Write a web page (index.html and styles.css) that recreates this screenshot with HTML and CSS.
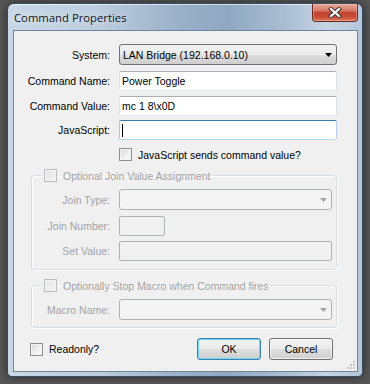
FILE: index.html
```html
<!DOCTYPE html>
<html lang="en">

<head>
    <meta charset="UTF-8">
    <title>Command Properties</title>
    <link rel="stylesheet" href="styles.css">
</head>

<body>

    <div class="window">
        <div class="titlebar">
            <span class="title">Command Properties</span>
            <div class="close">
                <svg width="14" height="11" viewBox="0 0 14 11">
                    <path d="M3 2 L11 9 M11 2 L3 9" stroke="#3a3a3a" stroke-width="4.2" stroke-linecap="square" fill="none"/>
                    <path d="M3 2 L11 9 M11 2 L3 9" stroke="#ffffff" stroke-width="2.2" stroke-linecap="square" fill="none"/>
                </svg>
            </div>
        </div>

        <div class="client">
            <div class="row row-system">
                <label class="lbl">System:</label>
                <div class="combo">
                    <span>LAN Bridge (192.168.0.10)</span>
                    <svg class="arrow" width="7" height="4" viewBox="0 0 7 4"><path d="M0 0 H7 L3.5 4 Z" fill="#000"/></svg>
                </div>
            </div>
            <div class="row row-name">
                <label class="lbl">Command Name:</label>
                <div class="textbox">Power Toggle</div>
            </div>
            <div class="row row-value">
                <label class="lbl">Command Value:</label>
                <div class="textbox">mc 1 8\x0D</div>
            </div>
            <div class="row row-js">
                <label class="lbl">JavaScript:</label>
                <div class="textbox focused"><span class="caret"></span></div>
            </div>
            <div class="check-row row-sends">
                <span class="chk"></span>
                <span>JavaScript sends command value?</span>
            </div>

            <fieldset class="group group-join">
                <legend><span class="chk off"></span><span>Optional Join Value Assignment</span></legend>
                <div class="row row-jtype">
                    <label class="lbl small">Join Type:</label>
                    <div class="combo off">
                        <svg class="arrow" width="7" height="4" viewBox="0 0 7 4"><path d="M0 0 H7 L3.5 4 Z" fill="#a4a4a4"/></svg>
                    </div>
                </div>
                <div class="row row-jnum">
                    <label class="lbl small">Join Number:</label>
                    <div class="textbox off short"></div>
                </div>
                <div class="row row-set">
                    <label class="lbl small">Set Value:</label>
                    <div class="textbox off"></div>
                </div>
            </fieldset>

            <fieldset class="group group-macro">
                <legend><span class="chk off"></span><span>Optionally Stop Macro when Command fires</span></legend>
                <div class="row row-macro">
                    <label class="lbl small">Macro Name:</label>
                    <div class="combo off">
                        <svg class="arrow" width="7" height="4" viewBox="0 0 7 4"><path d="M0 0 H7 L3.5 4 Z" fill="#a4a4a4"/></svg>
                    </div>
                </div>
            </fieldset>

            <div class="footer">
                <div class="check-row readonly">
                    <span class="chk"></span>
                    <span>Readonly?</span>
                </div>
                <div class="buttons">
                    <button class="btn default">OK</button>
                    <button class="btn">Cancel</button>
                </div>
            </div>

            <svg class="grip" width="8" height="8" viewBox="0 0 8 8">
                <rect x="6" y="0" width="2" height="2" fill="#c6c6c6"/>
                <rect x="3" y="3" width="2" height="2" fill="#c6c6c6"/>
                <rect x="6" y="3" width="2" height="2" fill="#c6c6c6"/>
                <rect x="0" y="6" width="2" height="2" fill="#c6c6c6"/>
                <rect x="3" y="6" width="2" height="2" fill="#c6c6c6"/>
                <rect x="6" y="6" width="2" height="2" fill="#c6c6c6"/>
            </svg>
        </div>
    </div>

</body>

</html>
```

FILE: styles.css
```css
html,
body {
    margin: 0;
    height: 100%;
}

body {
    background: #575757;
    font-family: "Liberation Sans", Arial, sans-serif;
    font-size: 10.5px;
    color: #000;
    overflow: hidden;
}

.window {
    margin: 3px 0 0 7px;
    width: 356px;
    height: 374px;
    box-sizing: border-box;
    border: 1px solid #3b4d61;
    border-radius: 7px 7px 5px 5px;
    padding: 0 4px 4px 5px;
    display: flex;
    flex-direction: column;
    background: linear-gradient(90deg, #c9d8e7 0%, #bccddf 25%, #98afc7 50%, #8fa8c2 62%, #a9bdd2 78%, #c4d4e4 90%, #b3c6da 100%);
    box-shadow: 0 0 10px rgba(0, 0, 0, 0.55), inset 0 1px 0 rgba(255, 255, 255, 0.6);
}

.titlebar {
    height: 26px;
    display: flex;
    justify-content: space-between;
    align-items: flex-start;
}

.title {
    font-family: "Open Sans", "Noto Sans", sans-serif;
    font-size: 11.3px;
    margin: 6px 0 0 1px;
    color: #141414;
    text-shadow: 0 0 6px rgba(255, 255, 255, 0.8);
}

.close {
    width: 46px;
    height: 18px;
    box-sizing: border-box;
    border: 1px solid #6b2a20;
    border-top: none;
    border-radius: 0 0 4px 4px;
    background: linear-gradient(#e9a99a 0%, #d67a67 40%, #c3452e 50%, #c84b35 75%, #dc7a5f 100%);
    box-shadow: inset 0 0 0 1px rgba(255, 220, 210, 0.35);
    display: flex;
    justify-content: center;
    align-items: center;
}

.client {
    position: relative;
    flex: 1;
    border: 1px solid #72849a;
    background: #f0f0f0;
    padding-top: 13px;
}

.row {
    display: flex;
    align-items: center;
}

.lbl {
    width: 96px;
    margin-right: 9px;
    text-align: right;
    white-space: nowrap;
}

.lbl.small {
    width: 78px;
    color: #a2a2a2;
}

.combo {
    width: 218px;
    height: 21px;
    box-sizing: border-box;
    border: 1px solid #707070;
    border-radius: 3px;
    background: linear-gradient(#f2f2f2 0%, #ebebeb 50%, #dddddd 51%, #cfcfcf 100%);
    display: flex;
    align-items: center;
    justify-content: space-between;
    padding: 0 4px 0 3px;
}

.arrow {
    margin-left: auto;
}

.textbox {
    width: 218px;
    height: 20px;
    box-sizing: border-box;
    border: 1px solid;
    border-color: #abadb3 #dbdfe6 #e3e9ef #e2e3ea;
    border-radius: 2px;
    background: #fff;
    padding: 0 2px;
    display: flex;
    align-items: center;
}

.textbox.focused {
    border-color: #3d7bad #b5cfe7 #b7d9ed #a4c9e3;
}

.caret {
    width: 1px;
    height: 13px;
    background: #000;
}

.row-name {
    margin-top: 6px;
}

.row-value {
    margin-top: 5px;
}

.row-js {
    margin-top: 4px;
}

.check-row {
    display: flex;
    align-items: center;
    gap: 6px;
}

.row-sends {
    margin: 8px 0 0 105px;
}

.chk {
    width: 13px;
    height: 13px;
    box-sizing: border-box;
    border: 1px solid #8e8f8f;
    background: linear-gradient(135deg, #d8d9db 0%, #f1f1f1 60%, #fbfbfb 100%);
    box-shadow: inset 0 0 0 1px #f4f4f4;
    flex-shrink: 0;
}

.chk.off {
    border-color: #bcbcbc;
    background: linear-gradient(135deg, #e6e6e6 0%, #f4f4f4 100%);
}

.group {
    width: 306px;
    box-sizing: border-box;
    margin: 8px 0 0 17px;
    padding: 0 0 8px 0;
    min-width: 0;
    border: 1px solid #d5dfe5;
    border-radius: 3px;
    box-shadow: inset 1px 1px 0 #fff, 1px 1px 0 #fff;
}

.group legend {
    margin-left: 10px;
    padding: 0 2px;
    height: 13px;
    display: flex;
    align-items: center;
    gap: 6px;
    color: #a2a2a2;
}

.group .lbl {
    margin-right: 9px;
}

.group .combo,
.group .textbox {
    width: 213px;
}

.combo.off {
    border-color: #adb2b5;
    background: #f4f4f4;
}

.textbox.off {
    border-color: #adb2b5;
    background: #f0f0f0;
}

.group .textbox.short {
    width: 46px;
}

.row-jtype {
    margin-top: 7px;
}

.row-jnum {
    margin-top: 6px;
}

.row-set {
    margin-top: 5px;
}

.group-macro {
    margin-top: 9px;
    padding-bottom: 7px;
}

.row-macro {
    margin-top: 7px;
}

.footer {
    display: flex;
    justify-content: space-between;
    align-items: center;
    margin: 10px 24px 0 16px;
}

.buttons {
    display: flex;
    gap: 8px;
}

.btn {
    width: 64px;
    height: 22px;
    padding: 0;
    font-family: "Liberation Sans", Arial, sans-serif;
    font-size: 10.5px;
    color: #000;
    border: 1px solid #707070;
    border-radius: 3px;
    background: linear-gradient(#f2f2f2 0%, #ebebeb 50%, #dddddd 51%, #cfcfcf 100%);
    box-shadow: inset 0 0 0 1px rgba(255, 255, 255, 0.7);
}

.btn.default {
    border-color: #3c7fb1;
    box-shadow: inset 0 0 0 1px #6fd6f6;
}

.grip {
    position: absolute;
    right: 2px;
    bottom: 2px;
}
```
